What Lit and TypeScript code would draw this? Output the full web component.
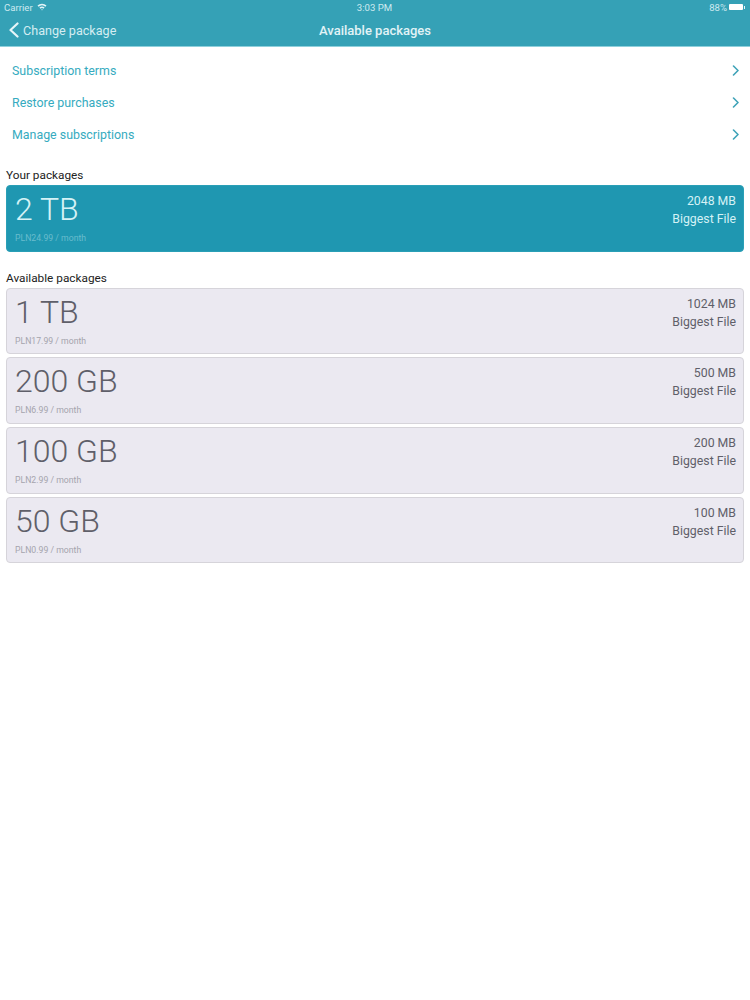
import { LitElement, html, css, svg } from "lit";
import { customElement } from "lit/decorators.js";

const yours = [{ size: "2 TB", price: "PLN24.99 / month", file: "2048 MB" }];
const available = [
  { size: "1 TB", price: "PLN17.99 / month", file: "1024 MB" },
  { size: "200 GB", price: "PLN6.99 / month", file: "500 MB" },
  { size: "100 GB", price: "PLN2.99 / month", file: "200 MB" },
  { size: "50 GB", price: "PLN0.99 / month", file: "100 MB" },
];
const links = ["Subscription terms", "Restore purchases", "Manage subscriptions"];

const chevron = svg`<path d="M1.5 1 L6 5.5 L1.5 10" fill="none" stroke="#3fa3b8" stroke-width="1.6" stroke-linecap="round" stroke-linejoin="round"/>`;

@customElement("app-root")
export class AppRoot extends LitElement {
  static styles = css`
    :host { display: block; width: 750px; height: 1000px; background: #fff; font-family: Roboto, "Liberation Sans", sans-serif; overflow: hidden; }
    .bar { background: #35a1b6; height: 46px; border-bottom: 1px solid #8fd0dc; box-sizing: content-box; color: #d9f0f4; }
    .status { height: 14px; display: grid; grid-template-columns: 1fr auto 1fr; align-items: center; padding: 0 5px 0 4px; font-size: 9.6px; color: #cfeaf0; }
    .status-left { display: flex; align-items: center; gap: 4px; }
    .status-right { display: flex; align-items: center; justify-content: flex-end; gap: 2px; }
    .battery { display: flex; align-items: center; gap: 1px; }
    .cell { width: 14px; height: 6px; background: #fff; border-radius: 1px; }
    .nub { width: 1px; height: 3px; background: #e6f5f8; }
    .nav { height: 32px; display: grid; grid-template-columns: 1fr auto 1fr; align-items: center; padding: 0 9px; }
    .back { display: flex; align-items: center; gap: 4px; font-size: 12.6px; color: #d4edf2; }
    .title { font-size: 13px; font-weight: 500; color: #e2f3f6; }
    .links { padding-top: 7px; }
    .link { height: 32px; display: flex; align-items: center; justify-content: space-between; padding: 0 10px 0 12px; font-size: 12.4px; color: #36abc0; }
    .label { font-size: 11.8px; line-height: 14px; color: #222; padding-left: 6px; margin-bottom: 3px; }
    .first { margin-top: 18px; }
    .second { margin-top: 19px; }
    .list { display: flex; flex-direction: column; gap: 3px; padding: 0 6px; }
    .card { height: 66.67px; box-sizing: border-box; border: 1px solid #d6d4da; border-radius: 4px; background: #ebe9f1; color: #5f5f69; padding: 0 7px 0 8px; display: flex; justify-content: space-between; }
    .card.own { background: #1f97b1; border-color: #2a9fb6; color: #d5f2f6; }
    .size { font-size: 32px; font-weight: 300; line-height: 36px; margin-top: 5px; }
    .price { font-size: 8.7px; line-height: 11px; color: #a5a4ad; margin-top: 6px; }
    .own .price { color: #69bccd; }
    .right { text-align: right; font-size: 12.3px; line-height: 18px; padding-top: 6px; }
  `;

  private card(p: { size: string; price: string; file: string }, own: boolean) {
    return html`<div class="card ${own ? "own" : ""}">
      <div><div class="size">${p.size}</div><div class="price">${p.price}</div></div>
      <div class="right"><div>${p.file}</div><div>Biggest File</div></div>
    </div>`;
  }

  render() {
    return html`
      <div class="bar">
        <div class="status">
          <div class="status-left">
            <span>Carrier</span>
            <svg width="10" height="8" viewBox="0 0 10 8"><path d="M0.5 2.6 A6.5 6.5 0 0 1 9.5 2.6 L8.4 3.8 A5 5 0 0 0 1.6 3.8 Z M2.4 4.6 A3.8 3.8 0 0 1 7.6 4.6 L6.5 5.7 A2.3 2.3 0 0 0 3.5 5.7 Z M4.2 6.5 A1.2 1.2 0 0 1 5.8 6.5 L5 7.5 Z" fill="#e3f4f7"/></svg>
          </div>
          <span>3:03 PM</span>
          <div class="status-right"><span>88%</span><div class="battery"><div class="cell"></div><div class="nub"></div></div></div>
        </div>
        <div class="nav">
          <div class="back">
            <svg width="10" height="16" viewBox="0 0 10 16"><path d="M8.5 1.5 L1.5 8 L8.5 14.5" fill="none" stroke="#e6f5f8" stroke-width="2.2" stroke-linecap="round" stroke-linejoin="round"/></svg>
            <span>Change package</span>
          </div>
          <div class="title">Available packages</div>
          <div></div>
        </div>
      </div>
      <div class="links">
        ${links.map((l) => html`<div class="link"><span>${l}</span><svg width="8" height="11" viewBox="0 0 8 11">${chevron}</svg></div>`)}
      </div>
      <div class="label first">Your packages</div>
      <div class="list">${yours.map((p) => this.card(p, true))}</div>
      <div class="label second">Available packages</div>
      <div class="list">${available.map((p) => this.card(p, false))}</div>
    `;
  }
}
